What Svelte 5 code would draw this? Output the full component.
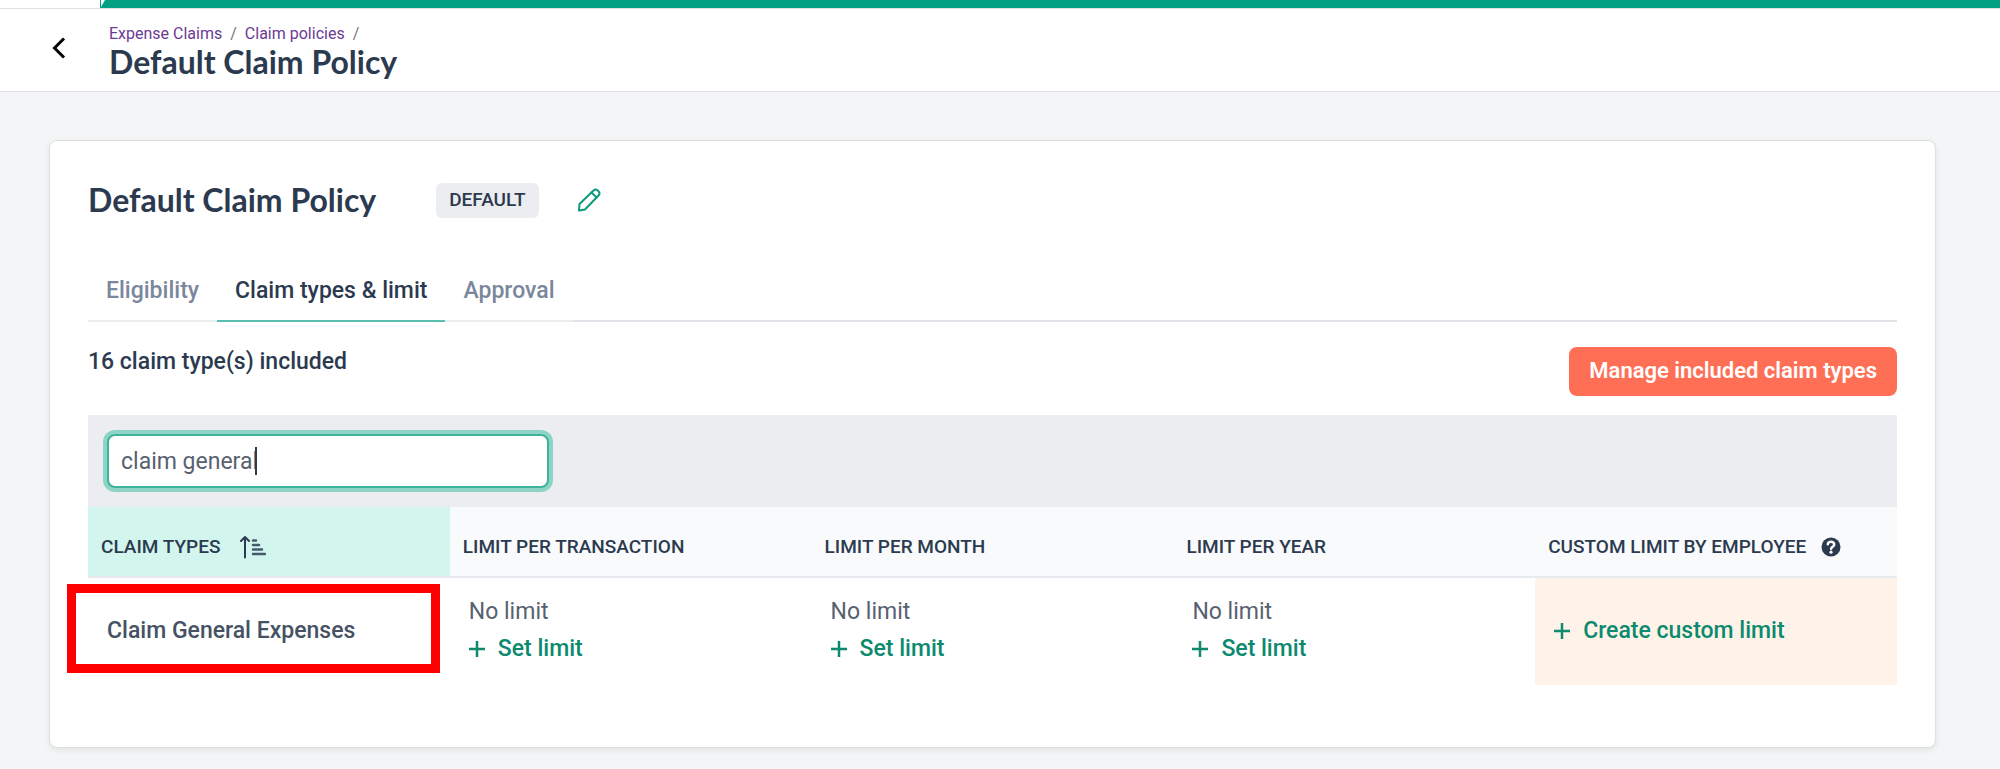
<script lang="ts">
	interface Crumb {
		readonly label: string;
		readonly href: string;
	}

	interface ClaimType {
		readonly id: string;
		readonly name: string;
		/** One entry per limit column: transaction, month, year. */
		readonly limits: readonly string[];
	}

	const crumbs: readonly Crumb[] = [
		{ label: 'Expense Claims', href: '#claims' },
		{ label: 'Claim policies', href: '#policies' },
	];

	const tabs = ['Eligibility', 'Claim types & limit', 'Approval'];
	const limitColumns = ['Limit per transaction', 'Limit per month', 'Limit per year'];

	const claimTypes: readonly ClaimType[] = [
		{
			id: 'general',
			name: 'Claim General Expenses',
			limits: ['No limit', 'No limit', 'No limit'],
		},
	];

	let activeTab = $state('Claim types & limit');
	let query = $state('claim general');
</script>

{#snippet plus()}
	<svg class="plus" width="18" height="18" viewBox="0 0 18 18" aria-hidden="true">
		<path d="M8 1v16M0 9h16" />
	</svg>
{/snippet}

<div class="topbar"><div class="topbar-fill"></div></div>

<header class="page-header">
	<button type="button" class="back" aria-label="Back">
		<svg width="14" height="22" viewBox="0 0 14 22" aria-hidden="true">
			<path d="M12 1.500 2.500 11l9.500 9.500" />
		</svg>
	</button>
	<div class="heading">
		<nav class="crumbs" aria-label="Breadcrumb">
			{#each crumbs as crumb (crumb.href)}
				<a href={crumb.href}>{crumb.label}</a>
				<span>/</span>
			{/each}
		</nav>
		<h1>Default Claim Policy</h1>
	</div>
</header>

<main class="card">
	<div class="policy">
		<h2>Default Claim Policy</h2>
		<span class="badge">DEFAULT</span>
		<button type="button" class="edit" aria-label="Edit policy">
			<svg width="24" height="24" viewBox="0 0 24 24" aria-hidden="true">
				<path d="M2 22.500l.5-6.500L16.500 2.500a3 3 0 0 1 4.200 0l.8.8a3 3 0 0 1 0 4.200L8 21.500z" />
				<path d="M14.500 4.500l5 5" />
			</svg>
		</button>
	</div>

	<div class="tabs" role="tablist">
		{#each tabs as tab (tab)}
			<button
				type="button"
				role="tab"
				class="tab"
				aria-selected={tab === activeTab}
				onclick={() => (activeTab = tab)}
			>
				{tab}
			</button>
		{/each}
		<div class="tabs-rest"></div>
	</div>

	<div class="summary">
		<p>16 claim type(s) included</p>
		<button type="button" class="manage">Manage included claim types</button>
	</div>

	<div class="filter">
		<div class="search">
			<input type="text" aria-label="Search claim types" bind:value={query} />
			<span class="caret"></span>
		</div>
	</div>

	<table>
		<thead>
			<tr>
				<th class="sorted" aria-sort="ascending">
					<span class="th-inner">
						Claim types
						<svg width="26" height="24" viewBox="0 0 26 24" aria-hidden="true">
							<path d="M5 22.500V2M1 6l4-4 4 4" />
							<path class="bars" d="M13 5.500h3M13 10h6M13 14.500h9M13 19h12" />
						</svg>
					</span>
				</th>
				{#each limitColumns as column (column)}
					<th>{column}</th>
				{/each}
				<th>
					<span class="th-inner help">
						Custom limit by employee
						<svg width="20" height="20" viewBox="0 0 20 20" aria-hidden="true">
							<circle cx="10" cy="10" r="9.500" />
							<path d="M6.800 7.300C7.200 3.800 13.300 3.900 13.200 7.400c0 2.300-3 2.200-3.100 4.400" />
							<circle class="dot" cx="10" cy="15.200" r="1.600" />
						</svg>
					</span>
				</th>
			</tr>
		</thead>
		<tbody>
			{#each claimTypes as type (type.id)}
				<tr>
					<td class="name">
						<span class="highlight"></span>
						{type.name}
					</td>
					{#each type.limits as limit, i (i)}
						<td>
							<div class="limit">{limit}</div>
							<button type="button" class="action">{@render plus()}Set limit</button>
						</td>
					{/each}
					<td class="custom">
						<button type="button" class="action">{@render plus()}Create custom limit</button>
					</td>
				</tr>
			{/each}
		</tbody>
	</table>
</main>

<style>
	:global(body) {
		background: #f4f5f7;
		color: #2c3a4f;
		font-family: Roboto, 'Liberation Sans', sans-serif;
		font-size: 23px;
		line-height: 28px;
	}
	button {
		background: none;
		border: 0;
		padding: 0;
		color: inherit;
		font: inherit;
		cursor: pointer;
	}
	svg {
		display: block;
		flex: none;
		fill: none;
		stroke: currentColor;
		stroke-width: 2;
		stroke-linecap: round;
		stroke-linejoin: round;
	}
	h1,
	h2 {
		margin: 0;
		font-family: Lato, 'Open Sans', sans-serif;
		font-size: 32px;
		font-weight: 700;
		line-height: 36px;
	}

	.topbar {
		height: 8px;
		padding-left: 100px;
		background: #fff;
		border-bottom: 1px solid #dfe1e6;
	}
	.topbar-fill {
		height: 8px;
		background: #02a183;
		/* White nick left by the slanted end of the brand strip. */
		clip-path: polygon(0 0, 1px 0, 1px 7px, 5px 0, 100% 0, 100% 100%, 0 100%);
	}

	.page-header {
		display: flex;
		align-items: center;
		height: 82px;
		padding-left: 52px;
		gap: 43px;
		background: #fff;
		border-bottom: 1px solid #dfe1e6;
	}
	.back {
		margin-bottom: 4px;
		color: #000;
	}
	.back svg {
		stroke-width: 3;
		stroke-linecap: butt;
		stroke-linejoin: miter;
	}
	.heading {
		padding-top: 4px;
	}
	.crumbs {
		display: flex;
		gap: 8px;
		font-size: 16px;
		line-height: 20px;
		color: #6f7685;
	}
	.crumbs a {
		color: #6b3a94;
		text-decoration: none;
	}

	.card {
		margin: 48px 64px 21px 49px;
		padding: 38px 38px 62px;
		background: #fff;
		border: 1px solid #dfe1e1;
		border-radius: 8px;
		box-shadow: 0 2px 6px rgba(0, 0, 0, 0.08);
	}
	.policy {
		display: flex;
		align-items: center;
		height: 42px;
	}
	.badge {
		margin-left: 60px;
		padding: 3px 13px 4px;
		background: #ecedf1;
		border-radius: 6px;
		font-size: 19px;
		font-weight: 500;
	}
	.edit {
		margin-left: 38px;
		color: #0b9a7d;
	}

	.tabs {
		display: flex;
		margin-top: 42px;
	}
	.tab {
		padding: 14px 18px 15px;
		border-bottom: 2px solid #ecedf1;
		color: #7b879c;
		font-weight: 500;
	}
	.tab[aria-selected='true'] {
		border-color: #5abfae;
		color: #2c3a4f;
	}
	.tabs-rest {
		flex: 1;
		border-bottom: 2px solid #e1e2e7;
	}

	.summary {
		display: flex;
		justify-content: space-between;
		margin: 25px 0 19px;
		font-weight: 500;
	}
	.summary p {
		margin: 1px 0 0;
	}
	.manage {
		padding: 10px 20px 11px;
		background: #ff6f56;
		border-radius: 8px;
		color: #fff;
		font-size: 22px;
		font-weight: 600;
	}

	.filter {
		padding: 19px;
		background: #ecedf1;
	}
	.search {
		position: relative;
		width: 442px;
	}
	.search input {
		display: block;
		box-sizing: border-box;
		width: 100%;
		height: 54px;
		padding: 0 12px;
		background: #fff;
		border: 2px solid #3db39c;
		border-radius: 8px;
		box-shadow: 0 0 0 4px #8fd2c6;
		color: #57616f;
		font: inherit;
		outline: 0;
	}
	.caret {
		position: absolute;
		top: 13px;
		left: 148px;
		width: 2px;
		height: 28px;
		background: #2c3a4f;
	}

	table {
		width: 100%;
		border-spacing: 0;
		table-layout: fixed;
	}
	th {
		box-sizing: border-box;
		height: 71px;
		padding: 10px 12px 0 13px;
		background: #f9fafc;
		border-bottom: 2px solid #e7eaee;
		font-size: 19px;
		font-weight: 500;
		text-align: left;
		text-transform: uppercase;
	}
	th.sorted {
		background: #d2f5ee;
	}
	.th-inner {
		display: flex;
		align-items: center;
		gap: 20px;
	}
	.th-inner .bars {
		stroke: #465a6c;
		stroke-width: 2.500;
	}
	.help {
		gap: 15px;
	}
	.help circle {
		fill: #2c3a4f;
		stroke: none;
	}
	.help path {
		stroke: #fff;
		stroke-width: 2.500;
	}
	.help .dot {
		fill: #fff;
	}
	td {
		position: relative;
		box-sizing: border-box;
		height: 107px;
		padding: 0 18px 2px 19px;
		color: #57616f;
	}
	.name {
		color: #465263;
		font-weight: 500;
	}
	.highlight {
		position: absolute;
		inset: 6px 10px 12px -21px;
		border: 9px solid #f00;
	}
	.limit {
		margin-bottom: 9px;
	}
	.action {
		display: flex;
		align-items: center;
		gap: 11px;
		color: #0b8a6e;
		font-weight: 500;
	}
	.plus {
		stroke-width: 2.500;
		stroke-linecap: butt;
	}
	.custom {
		background: #fff3e9;
	}
</style>
